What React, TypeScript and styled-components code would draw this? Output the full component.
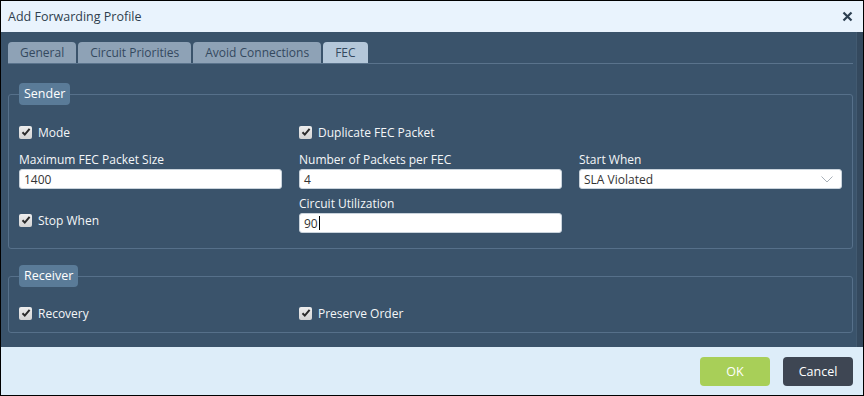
import styled, { createGlobalStyle } from "styled-components";

const GlobalStyle = createGlobalStyle`
  html, body {
    margin: 0;
    padding: 0;
  }

  body {
    font-family: "Open Sans", "Noto Sans", sans-serif;
    font-size: 12px;
  }

  * {
    box-sizing: border-box;
  }
`;

const Dialog = styled.div`
  display: flex;
  flex-direction: column;
  width: 864px;
  height: 396px;
  border: 1px solid #000;
  background: #3a536b;
`;

const Header = styled.div`
  display: flex;
  align-items: center;
  justify-content: space-between;
  height: 31px;
  padding: 0 9px 0 7px;
  background: #e9f3fd;
  color: #2f3e4e;
  font-size: 12.5px;
`;

const CloseButton = styled.button`
  display: flex;
  align-items: center;
  justify-content: center;
  width: 14px;
  height: 14px;
  padding: 0;
  border: none;
  background: none;
  cursor: pointer;
`;

const Body = styled.div`
  display: flex;
  flex: 1;
  min-height: 0;
`;

const Content = styled.div`
  flex: 1;
  padding: 10px 3px 0 7px;
`;

const Track = styled.div`
  width: 7px;
  background: #34495e;
  border-left: 1px solid #425a71;
`;

const TabStrip = styled.div`
  display: flex;
  gap: 2px;
  height: 22px;
  border-bottom: 1px solid #5a738c;
`;

const Tab = styled.div<{ $active?: boolean }>`
  display: flex;
  align-items: center;
  height: 21px;
  padding: 0 12px;
  border-radius: 4px 4px 0 0;
  background: ${({ $active }) => ($active ? "#b4c7d9" : "#8ea2b6")};
  color: #34495f;
  font-size: 12px;
`;

const Fieldset = styled.fieldset<{ $top: number; $bottom: number }>`
  margin: ${({ $top }) => $top}px 0 0 0;
  padding: ${({ $bottom }) => `0 9px ${$bottom}px 10px`};
  border: 1px solid #56708a;
  border-radius: 3px;
  min-width: 0;
`;

const Legend = styled.legend`
  height: 22px;
  padding: 0 5px;
  margin: 0;
  border-radius: 4px;
  background: #5a7b98;
  color: #fff;
  font-size: 12.5px;
  line-height: 22px;
`;

const Grid = styled.div<{ $pad: number }>`
  display: grid;
  grid-template-columns: 263px 263px 263px;
  column-gap: 17px;
  row-gap: 0;
  padding-top: ${({ $pad }) => $pad}px;
`;

const CheckRow = styled.label<{ $push?: number }>`
  display: flex;
  align-items: center;
  gap: 6px;
  height: 16px;
  color: #f4f6f8;
  font-size: 12px;
  align-self: end;
  margin-bottom: ${({ $push }) => $push ?? 0}px;
`;

const Box = styled.span`
  display: flex;
  align-items: center;
  justify-content: center;
  width: 13px;
  height: 13px;
  border-radius: 2px;
  background: linear-gradient(#eeeeee, #d4d4d4);
`;

const Field = styled.div<{ $top: number }>`
  display: flex;
  flex-direction: column;
  margin-top: ${({ $top }) => $top}px;
`;

const Label = styled.div`
  height: 16px;
  margin-bottom: 1px;
  color: #f4f6f8;
  font-size: 12px;
  line-height: 16px;
`;

const Input = styled.div`
  display: flex;
  align-items: center;
  height: 20px;
  padding: 0 4px;
  border: 1px solid #c9d3dc;
  border-radius: 3px;
  background: #fff;
  color: #333;
  font-size: 12px;
`;

const Select = styled(Input)`
  justify-content: space-between;
  padding-right: 8px;
`;

const Caret = styled.span`
  width: 1px;
  height: 14px;
  margin-left: 1px;
  background: #000;
`;

const Footer = styled.div`
  display: flex;
  align-items: center;
  justify-content: flex-end;
  gap: 13px;
  height: 48px;
  padding-right: 10px;
  background: #ddedf9;
`;

const Button = styled.button<{ $primary?: boolean }>`
  width: 70px;
  height: 29px;
  border: none;
  border-radius: 4px;
  background: ${({ $primary }) => ($primary ? "#a8cf58" : "#3e4653")};
  color: #fff;
  font-family: "Open Sans", "Noto Sans", sans-serif;
  font-size: 12.5px;
  cursor: pointer;
`;

function Check({ children, push }: { children: string; push?: number }) {
  return (
    <CheckRow $push={push}>
      <Box>
        <svg width="10" height="10" viewBox="0 0 10 10">
          <path
            d="M1.5 5.2 L3.8 7.6 L8.6 1.8"
            fill="none"
            stroke="#2b2b2b"
            strokeWidth="2"
          />
        </svg>
      </Box>
      {children}
    </CheckRow>
  );
}

export default function App() {
  return (
    <>
      <GlobalStyle />
      <Dialog>
        <Header>
          <span>Add Forwarding Profile</span>
          <CloseButton>
            <svg width="11" height="11" viewBox="0 0 11 11">
              <path
                d="M1.5 1.5 L9.5 9.5 M9.5 1.5 L1.5 9.5"
                stroke="#2c3e50"
                strokeWidth="2.2"
              />
            </svg>
          </CloseButton>
        </Header>
        <Body>
          <Content>
            <TabStrip>
              <Tab>General</Tab>
              <Tab>Circuit Priorities</Tab>
              <Tab>Avoid Connections</Tab>
              <Tab $active>FEC</Tab>
            </TabStrip>

            <Fieldset $top={19} $bottom={15}>
              <Legend>Sender</Legend>
              <Grid $pad={19}>
                <Check>Mode</Check>
                <Check>Duplicate FEC Packet</Check>
                <div />

                <Field $top={12}>
                  <Label>Maximum FEC Packet Size</Label>
                  <Input>1400</Input>
                </Field>
                <Field $top={12}>
                  <Label>Number of Packets per FEC</Label>
                  <Input>4</Input>
                </Field>
                <Field $top={12}>
                  <Label>Start When</Label>
                  <Select>
                    SLA Violated
                    <svg width="12" height="7" viewBox="0 0 12 7">
                      <path
                        d="M0.5 0.5 L6 6 L11.5 0.5"
                        fill="none"
                        stroke="#a8b0b8"
                        strokeWidth="1"
                      />
                    </svg>
                  </Select>
                </Field>

                <Check push={5}>Stop When</Check>
                <Field $top={7}>
                  <Label>Circuit Utilization</Label>
                  <Input>
                    90
                    <Caret />
                  </Input>
                </Field>
                <div />
              </Grid>
            </Fieldset>

            <Fieldset $top={16} $bottom={11}>
              <Legend>Receiver</Legend>
              <Grid $pad={18}>
                <Check>Recovery</Check>
                <Check>Preserve Order</Check>
              </Grid>
            </Fieldset>
          </Content>
          <Track />
        </Body>
        <Footer>
          <Button $primary>OK</Button>
          <Button>Cancel</Button>
        </Footer>
      </Dialog>
    </>
  );
}
